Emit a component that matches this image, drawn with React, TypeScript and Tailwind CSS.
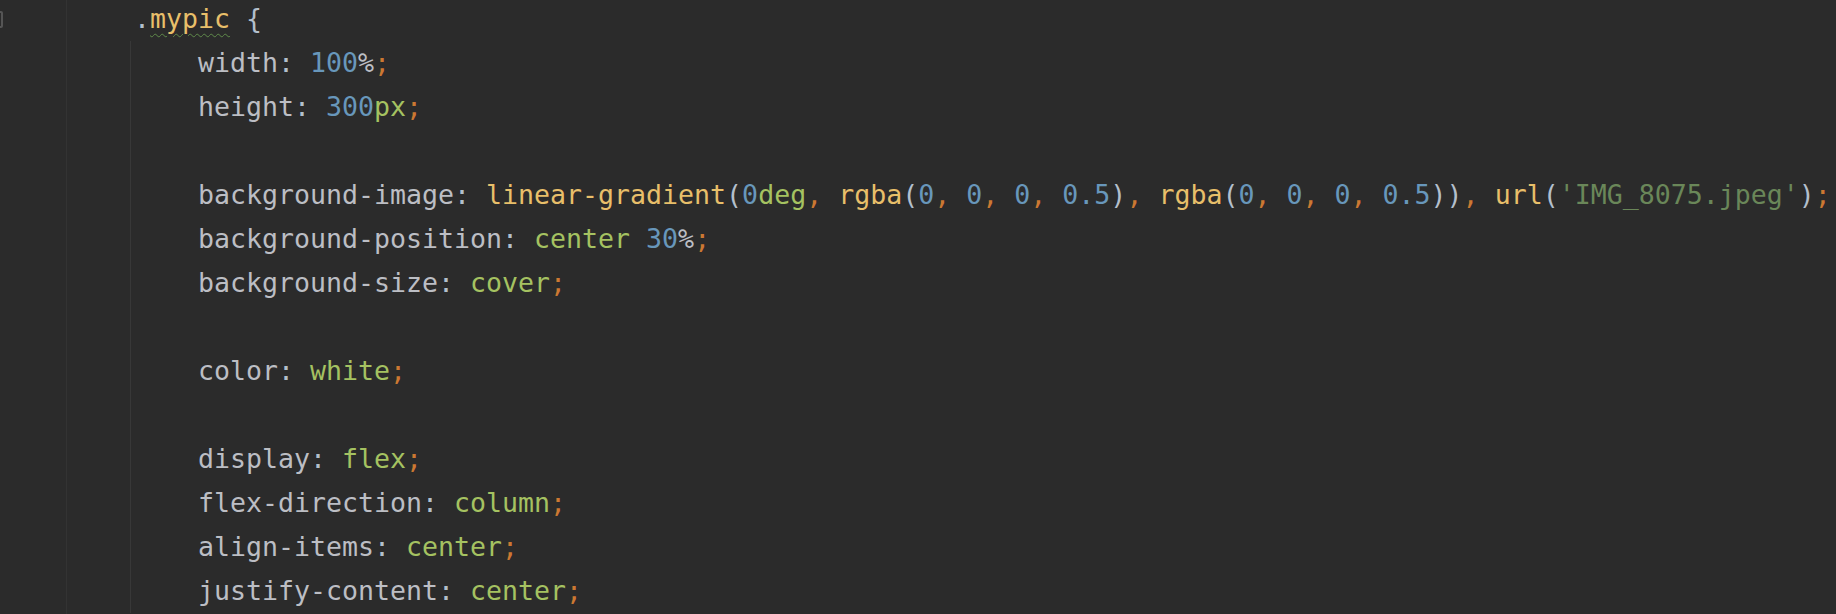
import React from "react";

type Tok = [string, string];

const P = "text-[#bcbec4]"; // property
const C = "text-[#b3bfcc]"; // punctuation : ( ) .
const N = "text-[#6897bb]"; // numbers
const V = "text-[#a5c261]"; // values/units
const S = "text-[#cc7832]"; // ; ,
const F = "text-[#e8bf6a]"; // functions
const STR = "text-[#6a8759]"; // string

const lines: Tok[][] = [
  [["width", P], [":", C], [" ", P], ["100", N], ["%", P], [";", S]],
  [["height", P], [":", C], [" ", P], ["300", N], ["px", V], [";", S]],
  [],
  [
    ["background-image", P], [":", C], [" ", P],
    ["linear-gradient", F], ["(", C], ["0", N], ["deg", V], [",", S], [" ", P],
    ["rgba", F], ["(", C], ["0", N], [",", S], [" ", P], ["0", N], [",", S], [" ", P], ["0", N], [",", S], [" ", P], ["0.5", N], [")", C], [",", S], [" ", P],
    ["rgba", F], ["(", C], ["0", N], [",", S], [" ", P], ["0", N], [",", S], [" ", P], ["0", N], [",", S], [" ", P], ["0.5", N], ["))", C], [",", S], [" ", P],
    ["url", F], ["(", C], ["'IMG_8075.jpeg'", STR], [")", C], [";", S],
  ],
  [["background-position", P], [":", C], [" ", P], ["center", V], [" ", P], ["30", N], ["%", P], [";", S]],
  [["background-size", P], [":", C], [" ", P], ["cover", V], [";", S]],
  [],
  [["color", P], [":", C], [" ", P], ["white", V], [";", S]],
  [],
  [["display", P], [":", C], [" ", P], ["flex", V], [";", S]],
  [["flex-direction", P], [":", C], [" ", P], ["column", V], [";", S]],
  [["align-items", P], [":", C], [" ", P], ["center", V], [";", S]],
  [["justify-content", P], [":", C], [" ", P], ["center", V], [";", S]],
];

function Line({ toks }: { toks: Tok[] }) {
  return (
    <div className="h-[44px] whitespace-pre">
      {toks.length === 0 ? "\u00a0" : toks.map((t, i) => (
        <span key={i} className={t[1]}>{t[0]}</span>
      ))}
    </div>
  );
}

export default function App() {
  return (
    <div
      className="flex h-[614px] w-[1836px] overflow-hidden bg-[#2b2b2b] text-[26.58px] leading-[44px]"
      style={{ fontFamily: '"DejaVu Sans Mono", "Liberation Mono", monospace' }}
    >
      <div className="flex w-[67px] shrink-0 flex-col border-r border-[#333333]">
        <div className="-ml-[8px] mt-[11px] h-[17px] w-[11px] rounded-[2px] border-2 border-[#555555]" />
      </div>
      <div className="-mt-[3px] flex flex-1 flex-col pl-[63px]">
        <div className="h-[44px] whitespace-pre pl-[4px]">
          <span className={C}>.</span>
          <span className="text-[#e8bf6a] underline decoration-wavy decoration-[#5f8a4a] decoration-1 underline-offset-[5px]">mypic</span>
          <span className={P}> </span>
          <span className={C}>{"{"}</span>
        </div>
        <div className="flex flex-col border-l border-[#383838] pl-[67px]">
          {lines.map((l, i) => (
            <Line key={i} toks={l} />
          ))}
        </div>
      </div>
    </div>
  );
}
